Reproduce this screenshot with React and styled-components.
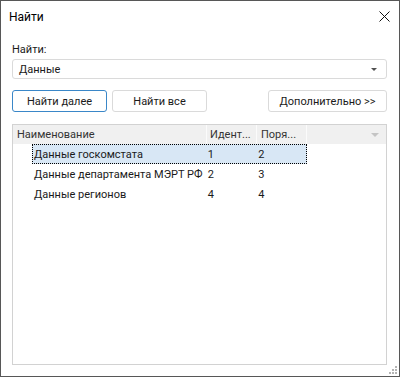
import React, { useState } from "react";
import styled, { createGlobalStyle } from "styled-components";

const GlobalStyle = createGlobalStyle`
  body {
    margin: 0;
    background: #fff;
    font-family: Roboto, "Noto Sans", sans-serif;
    font-size: 11px;
    color: #1a1a1a;
  }
`;

const rows = [
  { name: "Данные госкомстата", id: "1", order: "2" },
  { name: "Данные департамента МЭРТ РФ", id: "2", order: "3" },
  { name: "Данные регионов", id: "4", order: "4" },
];

function Grip() {
  const dots = [
    [6, 0],
    [3, 3], [6, 3],
    [0, 6], [3, 6], [6, 6],
  ];
  return (
    <GripBox width="8" height="8" viewBox="0 0 8 8">
      {dots.map(([x, y], i) => (
        <rect key={i} x={x} y={y} width="2" height="2" fill="#b4b4b4" />
      ))}
    </GripBox>
  );
}

export default function App() {
  const [selected, setSelected] = useState(0);

  return (
    <>
      <GlobalStyle />
      <Window>
        <TitleBar>
          <Title>Найти</Title>
          <CloseButton>
            <svg width="11" height="11" viewBox="0 0 11 11">
              <path d="M0.5 0.5 L10.5 10.5 M10.5 0.5 L0.5 10.5" stroke="#111" strokeWidth="1" />
            </svg>
          </CloseButton>
        </TitleBar>

        <Body>
          <Label>Найти:</Label>
          <Combo>
            <span>Данные</span>
            <ComboArrow />
          </Combo>

          <ButtonRow>
            <Button $primary $w={95}>Найти далее</Button>
            <Button $w={95}>Найти все</Button>
            <Spacer />
            <Button $w={119}>Дополнительно &gt;&gt;</Button>
          </ButtonRow>

          <Grid>
            <HeaderRow>
              <HeadCell $w={194} $pad={4}>Наименование</HeadCell>
              <HeadCell $w={50} $pad={3}>Идент...</HeadCell>
              <HeadCell $w={50} $pad={4}>Поря...</HeadCell>
              <HeadFiller>
                <HeadArrow />
              </HeadFiller>
            </HeaderRow>
            {rows.map((r, i) => (
              <Row key={i} onClick={() => setSelected(i)}>
                <Indent />
                <RowBody $active={selected === i}>
                  <NameCell>{r.name}</NameCell>
                  <ValCell $w={51}>{r.id}</ValCell>
                  <ValCell $w={48}>{r.order}</ValCell>
                </RowBody>
              </Row>
            ))}
          </Grid>
        </Body>
        <Grip />
      </Window>
    </>
  );
}

const Window = styled.div`
  position: relative;
  width: 400px;
  height: 377px;
  box-sizing: border-box;
  border: 1px solid #575757;
  display: flex;
  flex-direction: column;
  background: #fff;
`;

const TitleBar = styled.div`
  height: 31px;
  display: flex;
  align-items: center;
  padding-left: 8px;
  padding-right: 9px;
`;

const Title = styled.div`
  flex: 1;
  font-size: 12px;
  color: #000;
`;

const CloseButton = styled.div`
  width: 11px;
  height: 11px;
  display: flex;
`;

const Body = styled.div`
  flex: 1;
  display: flex;
  flex-direction: column;
  padding: 10px 12px 11px 11px;
  min-height: 0;
`;

const Label = styled.div`
  line-height: 16px;
  margin-bottom: 1px;
`;

const Combo = styled.div`
  height: 20px;
  box-sizing: border-box;
  border: 1px solid #dadada;
  border-radius: 3px;
  display: flex;
  align-items: center;
  padding: 0 9px 0 6px;
  span {
    flex: 1;
  }
`;

const ComboArrow = styled.div`
  width: 0;
  height: 0;
  border-left: 3px solid transparent;
  border-right: 3px solid transparent;
  border-top: 3px solid #505050;
`;

const ButtonRow = styled.div`
  display: flex;
  gap: 5px;
  margin-top: 11px;
`;

const Spacer = styled.div`
  flex: 1;
`;

const Button = styled.div`
  width: ${({ $w }) => $w}px;
  height: 22px;
  box-sizing: border-box;
  border: 1px solid ${({ $primary }) => ($primary ? "#3a87c8" : "#dadada")};
  border-radius: 3px;
  display: flex;
  align-items: center;
  justify-content: center;
  color: #1a1a1a;
`;

const Grid = styled.div`
  flex: 1;
  margin-top: 12px;
  border: 1px solid #d2d2d2;
  display: flex;
  flex-direction: column;
`;

const HeaderRow = styled.div`
  height: 19px;
  display: flex;
  background: #f0f0f0;
`;

const HeadCell = styled.div`
  width: ${({ $w }) => $w}px;
  box-sizing: border-box;
  padding-left: ${({ $pad }) => $pad}px;
  border-right: 1px solid #fbfbfb;
  display: flex;
  align-items: center;
  color: #333;
  white-space: nowrap;
  overflow: hidden;
`;

const HeadFiller = styled.div`
  flex: 1;
  display: flex;
  align-items: center;
  justify-content: flex-end;
  padding-right: 7px;
`;

const HeadArrow = styled.div`
  width: 0;
  height: 0;
  border-left: 4px solid transparent;
  border-right: 4px solid transparent;
  border-top: 4px solid #c4c4c4;
`;

const Row = styled.div`
  height: 20px;
  display: flex;
  cursor: default;
`;

const Indent = styled.div`
  width: 19px;
`;

const RowBody = styled.div`
  width: 275px;
  box-sizing: border-box;
  display: flex;
  align-items: center;
  border: 1px dotted ${({ $active }) => ($active ? "#000" : "transparent")};
  background: ${({ $active }) => ($active ? "#d8e7f5" : "transparent")};
  padding-left: 1px;
`;

const NameCell = styled.div`
  width: 175px;
  white-space: nowrap;
`;

const ValCell = styled.div`
  width: ${({ $w }) => $w}px;
  white-space: nowrap;
`;

const GripBox = styled.svg`
  position: absolute;
  right: 2px;
  bottom: 2px;
`;
